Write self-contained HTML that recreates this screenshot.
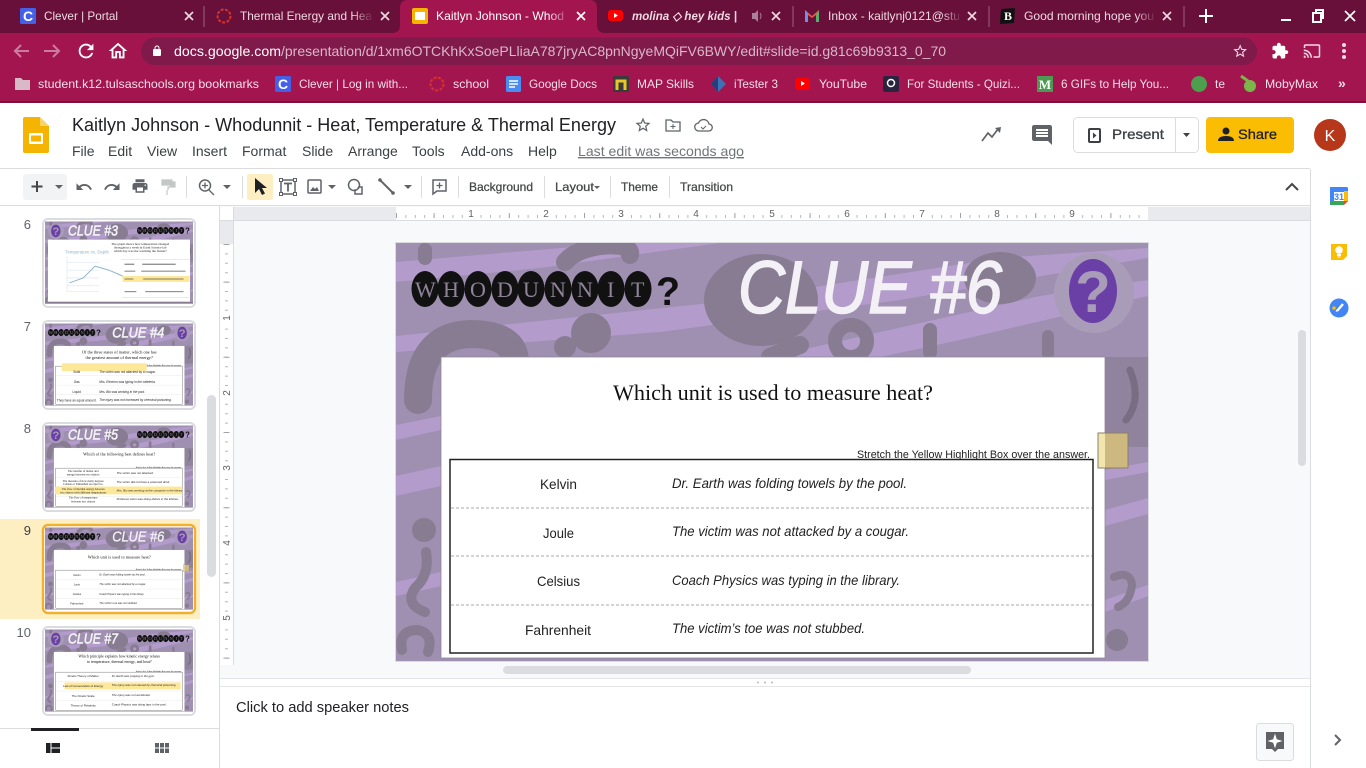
<!DOCTYPE html>
<html lang="en">
<head>
<meta charset="utf-8">
<title>Kaitlyn Johnson - Whodunnit - Heat, Temperature &amp; Thermal Energy</title>
<style>
html,body{margin:0;padding:0;width:1366px;height:768px;overflow:hidden;background:#fff}
svg{display:block;font-family:"Liberation Sans",Arial,sans-serif}
.tab{font-size:12px;fill:#f0d8e3}
.bm{font-size:12px;fill:#f2dfe8}
.menu{font-size:14px;fill:#3c4043}
.tb{font-size:12px;fill:#444746;stroke:#444746;stroke-width:.25px}
.rn{font-size:10px;fill:#5f6368}
.num{font-size:13px;fill:#5f6368}
.x{stroke:#fff;stroke-width:1.7;fill:none}
.xd{stroke:#f0d8e3;stroke-width:1.7;fill:none}
.clue{font-style:italic;font-size:74px;fill:#f3f1f5;stroke:#f3f1f5;stroke-width:1.6px}
.cluet{font-style:italic;font-size:74px;fill:#f3f1f5;stroke:#f3f1f5;stroke-width:3px}
</style>
</head>
<body>
<svg width="1366" height="768" viewBox="0 0 1366 768" xmlns="http://www.w3.org/2000/svg">
<defs>
<linearGradient id="fd" x1="0" x2="1" y1="0" y2="0"><stop offset="0" stop-color="#68103a" stop-opacity="0"/><stop offset="1" stop-color="#68103a"/></linearGradient>
<linearGradient id="fa" x1="0" x2="1" y1="0" y2="0"><stop offset="0" stop-color="#a3154f" stop-opacity="0"/><stop offset="1" stop-color="#a3154f"/></linearGradient>
<clipPath id="slideclip"><rect x="396" y="243" width="752" height="418"/></clipPath>

<g id="bg">
<rect x="396" y="243" width="752" height="418" fill="#9f8fb1"/>
<g fill="#b39ccb">
<polygon points="396,262 620,243 720,243 540,268 396,282"/>
<polygon points="396,336 720,302 1000,258 1148,248 1148,258 900,300 660,332 396,352"/>
<polygon points="770,357 1040,296 1148,280 1148,296 960,340 880,357"/>
<polygon points="396,476 441,466 441,486 396,496"/>
<polygon points="396,582 441,572 441,586 396,596"/>
<polygon points="1105,510 1148,498 1148,514 1105,526"/>
<polygon points="1105,600 1148,585 1148,596 1105,612"/>
<polygon points="1105,470 1148,462 1148,472 1105,480"/>
<polygon points="396,425 441,416 441,430 396,440"/>
</g>
<g fill="#887c92">
<ellipse cx="761" cy="300" rx="57" ry="46"/>
<circle cx="591" cy="333" r="20"/>
<circle cx="565" cy="347" r="11"/>
<ellipse cx="1000" cy="278" rx="36" ry="26"/>
<rect x="923" y="323" width="14" height="36" rx="7"/>
<rect x="1042" y="330" width="12" height="30" rx="6"/>
<rect x="418" y="243" width="14" height="22" rx="7"/>
<circle cx="424" cy="530" r="12"/>
<circle cx="1117" cy="640" r="11"/>
<rect x="1105" y="357" width="43" height="90" opacity=".65"/>
</g>
<g fill="none" stroke="#887c92" stroke-linecap="round">
<path d="M565 262Q575 250 600 246Q632 243 630 255" stroke-width="18"/>
<path d="M418 400Q418 336 470 334Q515 334 515 362" stroke-width="28"/>
<path d="M851 325a16 16 0 1 0 .1 0" stroke-width="14"/>
<path d="M800 345L770 357" stroke-width="18"/>
<path d="M426 552Q430 575 415 588Q404 604 425 612" stroke-width="10"/>
<path d="M1114 577Q1130 570 1132 585Q1130 602 1118 607" stroke-width="8"/>
<path d="M402 650Q398 630 418 630Q434 634 428 652" stroke-width="10"/>
<path d="M1126 420Q1142 400 1130 370" stroke-width="7" stroke="#786d82"/>
</g>
</g>

<g id="whod">
<g fill="#111">
<ellipse cx="425" cy="289" rx="13.500" ry="18"/><ellipse cx="451" cy="289" rx="13.500" ry="18"/><ellipse cx="478" cy="289" rx="13.500" ry="18"/><ellipse cx="505" cy="289" rx="13.500" ry="18"/><ellipse cx="531" cy="289" rx="13.500" ry="18"/><ellipse cx="558" cy="289" rx="13.500" ry="18"/><ellipse cx="585" cy="289" rx="13.500" ry="18"/><ellipse cx="611" cy="289" rx="13.500" ry="18"/><ellipse cx="638" cy="289" rx="13.500" ry="18"/>
</g>
<text x="415 443 470 497 523 550 577 607 631" y="297" font-family="'Liberation Serif',serif" font-size="22" fill="#8f8399">WHODUNNIT</text>
<text x="656" y="305" font-weight="bold" font-size="40" fill="#111" textLength="24" lengthAdjust="spacingAndGlyphs">?</text>
</g>

<g id="badge">
<circle cx="1094" cy="293" r="40" fill="#a99cb9"/>
<ellipse cx="1093" cy="291" rx="24" ry="32" fill="#6a3fa6"/>
<text x="1093" y="312" text-anchor="middle" font-weight="bold" font-size="58" fill="#a99cb9">?</text>
</g>

<g id="panel">
<rect x="441" y="357" width="664" height="301" fill="#fff" stroke="#8f8a96" stroke-width=".8"/>
<text x="857" y="458" font-size="11" fill="#222" textLength="233" lengthAdjust="spacingAndGlyphs">Stretch the Yellow Highlight Box over the answer.</text>
<rect x="450" y="459.500" width="643" height="193.500" fill="#fff" stroke="#222" stroke-width="1.500"/>
<g stroke="#a8a8a8" stroke-dasharray="3 2"><path d="M451 508H1092M451 556H1092M451 605H1092"/></g>
</g>

<g id="slide6body">
<use href="#bg"/>
<use href="#whod"/>
<text class="clue" x="738" y="313" textLength="264" lengthAdjust="spacingAndGlyphs">CLUE #6</text>
<use href="#badge"/>
<use href="#panel"/>
<text x="613" y="400" font-family="'Liberation Serif',serif" font-size="22" fill="#111" textLength="320" lengthAdjust="spacingAndGlyphs">Which unit is used to measure heat?</text>
<g font-size="14" fill="#222">
<text x="540" y="489" textLength="37" lengthAdjust="spacingAndGlyphs">Kelvin</text>
<text x="543" y="538" textLength="31" lengthAdjust="spacingAndGlyphs">Joule</text>
<text x="537" y="586" textLength="43" lengthAdjust="spacingAndGlyphs">Celsius</text>
<text x="525" y="635" textLength="66" lengthAdjust="spacingAndGlyphs">Fahrenheit</text>
</g>
<g font-size="14" font-style="italic" fill="#222">
<text x="672" y="488" textLength="235" lengthAdjust="spacingAndGlyphs">Dr. Earth was folding towels by the pool.</text>
<text x="672" y="536" textLength="237" lengthAdjust="spacingAndGlyphs">The victim was not attacked by a cougar.</text>
<text x="672" y="585" textLength="228" lengthAdjust="spacingAndGlyphs">Coach Physics was typing in the library.</text>
<text x="672" y="633" textLength="193" lengthAdjust="spacingAndGlyphs">The victim’s toe was not stubbed.</text>
</g>
<rect x="1098" y="433" width="7" height="35" fill="#f2e6ae"/>
<rect x="1105" y="433" width="23" height="35" fill="#cdb97f"/>
<rect x="1098" y="433" width="30" height="35" fill="none" stroke="#8a8065"/>
</g>

<g id="hdrR">
<use href="#bg"/>
<use href="#badge" transform="translate(-642,0)"/>
<use href="#whod" transform="translate(452,0)"/>
</g>
<g id="hdrL">
<use href="#bg"/>
<use href="#whod"/>
<use href="#badge"/>
</g>
<clipPath id="tc"><rect x="396" y="243" width="752" height="418"/></clipPath>

<g id="fav-c"><rect x="0" y="0" width="16" height="16" rx="1.500" fill="#4460e6"/><text x="8" y="13" font-size="14" font-weight="bold" text-anchor="middle" fill="#fff">C</text></g>
<g id="ring"><circle cx="8" cy="8" r="6.500" fill="none" stroke="#d7332c" stroke-width="2" stroke-dasharray="3 1.500"/></g>
</defs>

<!-- CHROME TAB STRIP -->
<rect width="1366" height="33" fill="#68103a"/>
<rect y="33" width="1366" height="68" fill="#a3154f"/>
<rect y="101" width="1366" height="2" fill="#7a1238"/>
<path d="M392 33q8 0 8-8V8q0-8 8-8h181q8 0 8 8v17q0 8 8 8z" fill="#a3154f"/>
<g stroke="#9a5f7c"><path d="M204 6V27M793 6V27M989 6V27M1184 6V27"/></g>

<use href="#fav-c" x="20" y="8"/>
<text class="tab" x="44" y="20" textLength="74" lengthAdjust="spacingAndGlyphs">Clever | Portal</text>
<path class="xd" d="M185 12l8 8m0-8l-8 8"/>
<use href="#ring" x="216" y="8"/>
<text class="tab" x="240" y="20" textLength="132" lengthAdjust="spacingAndGlyphs">Thermal Energy and Hea</text>
<rect x="352" y="8" width="22" height="16" fill="url(#fd)"/>
<path class="xd" d="M381 12l8 8m0-8l-8 8"/>

<rect x="412" y="8" width="16" height="16" rx="2" fill="#f4b400"/><rect x="415" y="12" width="10" height="8" fill="#fff"/>
<text x="436" y="20" font-size="12" fill="#fff" textLength="128" lengthAdjust="spacingAndGlyphs">Kaitlyn Johnson - Whod</text>
<rect x="548" y="8" width="22" height="16" fill="url(#fa)"/>
<path class="x" d="M577 12l8 8m0-8l-8 8"/>

<rect x="608" y="10" width="15" height="11" rx="3" fill="#f00"/><path d="M614 13v5l4-2.500z" fill="#fff"/>
<text x="632" y="20" font-size="12" font-weight="bold" font-style="italic" fill="#f0d8e3" textLength="105" lengthAdjust="spacingAndGlyphs">molina ◇ hey kids |</text>
<path d="M752 13h3l3-3v12l-3-3h-3z" fill="#a98097"/><path d="M760 13q2 3 0 6" stroke="#a98097" fill="none"/>
<path class="xd" d="M772 12l8 8m0-8l-8 8"/>

<path d="M805 22V10l7 6 7-6v12h-3v-7l-4 3-4-3v7z" fill="#e35a4a"/><path d="M816 22v-7l3-5v12z" fill="#5ab06a"/><path d="M805 22V10l3 3v9z" fill="#6f8fe0"/>
<text class="tab" x="828" y="20" textLength="132" lengthAdjust="spacingAndGlyphs">Inbox - kaitlynj0121@stu</text>
<rect x="942" y="8" width="20" height="16" fill="url(#fd)"/>
<path class="xd" d="M968 12l8 8m0-8l-8 8"/>

<path d="M1001 9l14-1-1 15-14 1z" fill="#111"/><text x="1008" y="20" font-size="12" font-weight="bold" text-anchor="middle" fill="#fff" font-family="'Liberation Serif',serif">B</text>
<text class="tab" x="1024" y="20" textLength="130" lengthAdjust="spacingAndGlyphs">Good morning hope you</text>
<rect x="1136" y="8" width="20" height="16" fill="url(#fd)"/>
<path class="xd" d="M1163 12l8 8m0-8l-8 8"/>

<path d="M1206 9v14M1199 16h14" stroke="#fff" stroke-width="2"/>
<rect x="1281" y="19" width="10" height="2" fill="#fff"/>
<path d="M1313 13h8v9h-8zM1316 13v-3h7v8h-2" fill="none" stroke="#fff" stroke-width="2"/>
<path class="x" d="M1345 11l10 10m0-10l-10 10"/>

<!-- TOOLBAR -->
<rect x="141" y="37.500" width="1116" height="27.500" rx="13.750" fill="#7f1a4b"/>
<path d="M14 51h15M21 45l-6 6 6 6" stroke="#cc7c9f" stroke-width="2" fill="none"/>
<path d="M44 51h15M53 45l6 6-6 6" stroke="#cc7c9f" stroke-width="2" fill="none"/>
<path transform="translate(75,40) scale(.92)" fill="#fff" d="M17.650 6.350C16.200 4.900 14.210 4 12 4c-4.420 0-7.990 3.580-7.990 8s3.570 8 7.990 8c3.730 0 6.840-2.550 7.730-6h-2.080c-.82 2.330-3.040 4-5.650 4-3.310 0-6-2.690-6-6s2.690-6 6-6c1.660 0 3.140.69 4.220 1.780L13 11h7V4l-2.350 2.350z"/>
<path transform="translate(107,40) scale(.92)" fill="#fff" d="M12 5.690l5 4.500V18h-2v-6H9v6H7v-7.810l5-4.500M12 3L2 12h3v8h6v-6h2v6h6v-8h3L12 3z"/>
<path transform="translate(151,45) scale(.5)" fill="#fff" d="M18 8h-1V6c0-2.760-2.240-5-5-5S7 3.240 7 6v2H6c-1.100 0-2 .9-2 2v10c0 1.100.9 2 2 2h12c1.100 0 2-.9 2-2V10c0-1.100-.9-2-2-2zM9 6c0-1.660 1.340-3 3-3s3 1.340 3 3v2H9V6z"/>
<text x="174" y="56" font-size="14" fill="#fff" textLength="107" lengthAdjust="spacingAndGlyphs">docs.google.com</text>
<text x="281" y="56" font-size="14" fill="#dcb6c8" textLength="665" lengthAdjust="spacingAndGlyphs">/presentation/d/1xm6OTCKhKxSoePLliaA787jryAC8pnNgyeMQiFV6BWY/edit#slide=id.g81c69b9313_0_70</text>
<path transform="translate(1232,43) scale(.68)" fill="#f3dbe6" d="M22 9.240l-7.190-.62L12 2 9.190 8.630 2 9.240l5.460 4.730L5.820 21 12 17.270 18.180 21l-1.630-7.030L22 9.240zM12 15.400l-3.760 2.270 1-4.280-3.320-2.880 4.380-.38L12 6.100l1.710 4.040 4.380.38-3.320 2.880 1 4.280L12 15.400z"/>
<path transform="translate(1271,42) scale(.75)" fill="#fff" d="M20.500 11H19V7c0-1.100-.9-2-2-2h-4V3.500C13 2.120 11.880 1 10.500 1S8 2.120 8 3.500V5H4c-1.100 0-1.990.9-1.990 2v3.800H3.500c1.490 0 2.700 1.210 2.700 2.700s-1.210 2.700-2.700 2.700H2V20c0 1.100.9 2 2 2h3.800v-1.500c0-1.490 1.210-2.700 2.700-2.700 1.490 0 2.700 1.210 2.700 2.700V22H17c1.100 0 2-.9 2-2v-4h1.500c1.380 0 2.500-1.120 2.500-2.500S21.880 11 20.500 11z"/>
<path transform="translate(1303,42) scale(.75)" fill="#f3dbe6" d="M21 3H3c-1.100 0-2 .9-2 2v3h2V5h18v14h-7v2h7c1.100 0 2-.9 2-2V5c0-1.100-.9-2-2-2zM1 18v3h3c0-1.660-1.340-3-3-3zm0-4v2c2.760 0 5 2.240 5 5h2c0-3.870-3.130-7-7-7zm0-4v2c4.970 0 9 4.030 9 9h2c0-6.080-4.930-11-11-11z"/>
<g fill="#f3dbe6"><circle cx="1344" cy="45" r="2"/><circle cx="1344" cy="51" r="2"/><circle cx="1344" cy="57" r="2"/></g>

<!-- BOOKMARKS -->
<path d="M15 78h6l2 2h7v10H15z" fill="#d8b9c8"/>
<text class="bm" x="38" y="88" textLength="221" lengthAdjust="spacingAndGlyphs">student.k12.tulsaschools.org bookmarks</text>
<use href="#fav-c" x="275" y="76"/>
<text class="bm" x="299" y="88" textLength="109" lengthAdjust="spacingAndGlyphs">Clever | Log in with...</text>
<use href="#ring" x="429" y="76"/>
<text class="bm" x="453" y="88" textLength="36" lengthAdjust="spacingAndGlyphs">school</text>
<rect x="506" y="76" width="15" height="16" rx="1.500" fill="#4a8df0"/><path d="M509 81h9M509 84h9M509 87h6" stroke="#fff" stroke-width="1.500"/>
<text class="bm" x="529" y="88" textLength="68" lengthAdjust="spacingAndGlyphs">Google Docs</text>
<rect x="613" y="76" width="16" height="16" rx="1" fill="#3a3a3a"/><path d="M617 90V81h8v9" fill="none" stroke="#e8c52a" stroke-width="3"/>
<text class="bm" x="637" y="88" textLength="57" lengthAdjust="spacingAndGlyphs">MAP Skills</text>
<path d="M718 76l8 8-8 8-7-8z" fill="#3b72b8"/><path d="M718 76l-7 8 7 8z" fill="#243f7a"/>
<text class="bm" x="734" y="88" textLength="44" lengthAdjust="spacingAndGlyphs">iTester 3</text>
<rect x="795" y="78" width="15" height="12" rx="3" fill="#f00"/><path d="M801 81v5l4-2.500z" fill="#fff"/>
<text class="bm" x="819" y="88" textLength="48" lengthAdjust="spacingAndGlyphs">YouTube</text>
<rect x="883" y="76" width="16" height="16" rx="2" fill="#2a2440"/><circle cx="891" cy="83" r="3.500" fill="none" stroke="#fff" stroke-width="1.500"/>
<text class="bm" x="907" y="88" textLength="113" lengthAdjust="spacingAndGlyphs">For Students - Quizi...</text>
<rect x="1037" y="76" width="16" height="16" fill="#4c9a52"/><text x="1045" y="89" font-size="13" font-weight="bold" text-anchor="middle" fill="#fff" font-family="'Liberation Serif',serif">M</text>
<text class="bm" x="1061" y="88" textLength="108" lengthAdjust="spacingAndGlyphs">6 GIFs to Help You...</text>
<circle cx="1199" cy="84" r="8" fill="#4c9f4c"/>
<text class="bm" x="1215" y="88" textLength="10" lengthAdjust="spacingAndGlyphs">te</text>
<ellipse cx="1250" cy="86" rx="6" ry="6" fill="#7ab648"/><path d="M1241 76l7 5" stroke="#7ab648" stroke-width="3"/>
<text class="bm" x="1265" y="88" textLength="53" lengthAdjust="spacingAndGlyphs">MobyMax</text>
<text x="1338" y="88" font-size="14" font-weight="bold" fill="#f3dbe6">»</text>

<!-- DOCS HEADER -->
<rect y="103" width="1366" height="665" fill="#fff"/>
<path d="M25 117h15l9 9v25q0 2-2 2H25q-2 0-2-2v-32q0-2 2-2z" fill="#f4b400"/>
<path d="M40 117l9 9h-9z" fill="#f8d568"/>
<rect x="29" y="133" width="14" height="11" rx="1" fill="#fff"/><rect x="31" y="135.500" width="10" height="6" fill="#f4b400"/>
<text x="72" y="131" font-size="18" fill="#202124" textLength="544" lengthAdjust="spacingAndGlyphs">Kaitlyn Johnson - Whodunnit - Heat, Temperature &amp; Thermal Energy</text>
<path transform="translate(634,116) scale(.75)" fill="#5f6368" d="M22 9.240l-7.190-.62L12 2 9.190 8.630 2 9.240l5.460 4.730L5.820 21 12 17.270 18.180 21l-1.630-7.030L22 9.240zM12 15.400l-3.760 2.270 1-4.280-3.320-2.880 4.380-.38L12 6.100l1.710 4.040 4.380.38-3.320 2.880 1 4.280L12 15.400z"/>
<path d="M666 120h5l2 2h7v9h-14z" fill="none" stroke="#5f6368" stroke-width="1.300"/><path d="M673 124v5M670.500 126.500h5" stroke="#5f6368"/>
<path d="M699 131a4 4 0 0 1-.5-8 5.500 5.500 0 0 1 10.500 1 3.500 3.500 0 0 1-.5 7z" fill="none" stroke="#5f6368" stroke-width="1.300"/><path d="M701 127l2 2 3-3" fill="none" stroke="#5f6368"/>
<text class="menu" x="72" y="156">File</text>
<text class="menu" x="108" y="156">Edit</text>
<text class="menu" x="147" y="156">View</text>
<text class="menu" x="192" y="156">Insert</text>
<text class="menu" x="242" y="156">Format</text>
<text class="menu" x="302" y="156">Slide</text>
<text class="menu" x="348" y="156">Arrange</text>
<text class="menu" x="412" y="156">Tools</text>
<text class="menu" x="461" y="156">Add-ons</text>
<text class="menu" x="528" y="156">Help</text>
<text x="578" y="156" font-size="14" fill="#70757a" text-decoration="underline" textLength="166" lengthAdjust="spacingAndGlyphs">Last edit was seconds ago</text>

<path fill="none" stroke="#5f6368" stroke-width="1.700" d="M982 141l6-8 4 4 6-8"/><path d="M995 128l6-1-1 6z" fill="#5f6368"/>
<path transform="translate(1030,123)" fill="#5f6368" d="M21.990 4c0-1.100-.89-2-1.990-2H4c-1.100 0-2 .9-2 2v12c0 1.100.9 2 2 2h14l4 4-.01-18zM18 14H6v-2h12v2zm0-3H6V9h12v2zm0-3H6V6h12v2z"/>
<rect x="1073.500" y="117.500" width="125" height="35" rx="4" fill="#fff" stroke="#dadce0"/>
<path d="M1175.500 118V152" stroke="#dadce0"/>
<rect x="1089" y="129" width="11" height="13" rx="1" fill="none" stroke="#3c4043" stroke-width="2"/><path d="M1093 132.500v6l3.500-3z" fill="#3c4043"/>
<text x="1112" y="139" font-size="14" fill="#3c4043" stroke="#3c4043" stroke-width=".3" textLength="52" lengthAdjust="spacingAndGlyphs">Present</text>
<path d="M1183 133h7l-3.500 4z" fill="#3c4043"/>
<rect x="1206" y="117" width="88" height="36" rx="4" fill="#fbbc04"/>
<circle cx="1226" cy="131" r="3.500" fill="#202124"/><path d="M1218 141q0-5 8-5t8 5z" fill="#202124"/>
<text x="1238" y="139" font-size="14" fill="#202124" stroke="#202124" stroke-width=".3" textLength="39" lengthAdjust="spacingAndGlyphs">Share</text>
<circle cx="1330" cy="135" r="16" fill="#b7371a"/>
<text x="1330" y="141" font-size="16" text-anchor="middle" fill="#fff">K</text>

<path d="M0 168.500H1310" stroke="#dadce0"/>

<!-- EDIT TOOLBAR -->
<rect x="23" y="174" width="44" height="26" rx="3" fill="#f1f3f4"/>
<path d="M37 181v11M31.500 186.500h11" stroke="#444746" stroke-width="2"/>
<path d="M55 185h8l-4 4z" fill="#5f6368"/>
<path transform="translate(75,178) scale(.75)" fill="#5f6368" d="M12.500 8c-2.650 0-5.050.99-6.900 2.600L2 7v9h9l-3.620-3.620c1.390-1.160 3.160-1.880 5.120-1.880 3.540 0 6.550 2.310 7.600 5.500l2.370-.78C21.080 11.030 17.150 8 12.500 8z"/>
<path transform="translate(103,178) scale(.75)" fill="#5f6368" d="M18.400 10.600C16.550 8.990 14.150 8 11.500 8c-4.650 0-8.580 3.030-9.960 7.220L3.900 16c1.050-3.190 4.050-5.500 7.600-5.500 1.950 0 3.730.72 5.120 1.880L13 16h9V7l-3.600 3.600z"/>
<path transform="translate(131,177) scale(.75)" fill="#5f6368" d="M19 8H5c-1.660 0-3 1.340-3 3v6h4v4h12v-4h4v-6c0-1.660-1.340-3-3-3zm-3 11H8v-5h8v5zm3-7c-.55 0-1-.45-1-1s.45-1 1-1 1 .45 1 1-.45 1-1 1zm-1-9H6v4h12V3z"/>
<path d="M162 180h10v5h-10zM172 182h3v5h-7v3M167 190v5" fill="#c4c7c5" stroke="#c4c7c5" stroke-width="1.200"/>
<g stroke="#dadce0"><path d="M186.500 176V198M242.500 176V198M421.500 176V198M458.500 176V198M544.500 176V198M610.500 176V198M669.500 176V198"/></g>
<circle cx="205" cy="185.500" r="5.500" fill="none" stroke="#5f6368" stroke-width="1.500"/><path d="M209 190l5 5M202 185.500h6M205 182.500v6" stroke="#5f6368" stroke-width="1.300"/>
<path d="M223 185h8l-4 4z" fill="#5f6368"/>
<rect x="247" y="174" width="26" height="26" rx="2" fill="#feefc3"/>
<path d="M255 178v15l4-4 3 6 3-1.500-3-5.500h5z" fill="#202124"/>
<rect x="281" y="180" width="14" height="14" fill="none" stroke="#5f6368" stroke-width="1.500"/>
<g fill="#fff" stroke="#5f6368"><rect x="279.500" y="178.500" width="3" height="3"/><rect x="293.500" y="178.500" width="3" height="3"/><rect x="279.500" y="192.500" width="3" height="3"/><rect x="293.500" y="192.500" width="3" height="3"/></g>
<path d="M284 183.500h8M288 183.500v8" stroke="#5f6368" stroke-width="1.800"/>
<rect x="308" y="180" width="13" height="13" rx="1" fill="none" stroke="#5f6368" stroke-width="1.500"/><path d="M310 191l3-4 2 2 2-2 2 4z" fill="#5f6368"/>
<path d="M328 185h8l-4 4z" fill="#5f6368"/>
<path d="M355 187h7v7h-7z" fill="none" stroke="#5f6368" stroke-width="1.500"/><circle cx="354" cy="185" r="4.500" fill="#fff"/><circle cx="354" cy="185" r="5.500" fill="none" stroke="#5f6368" stroke-width="1.500"/>
<path d="M380 180l13 13" stroke="#5f6368" stroke-width="2"/><circle cx="380" cy="180" r="1.800" fill="#5f6368"/><circle cx="393" cy="193" r="1.800" fill="#5f6368"/>
<path d="M404 185h8l-4 4z" fill="#5f6368"/>
<path d="M433 180h13v11h-9l-4 3z" fill="none" stroke="#5f6368" stroke-width="1.500"/><path d="M439.500 182.500v6M436.500 185.500h6" stroke="#5f6368" stroke-width="1.300"/>
<text class="tb" x="469" y="191" textLength="64" lengthAdjust="spacingAndGlyphs">Background</text>
<text class="tb" x="555" y="191" textLength="39" lengthAdjust="spacingAndGlyphs">Layout</text>
<path d="M594 186h6l-3 3z" fill="#5f6368"/>
<text class="tb" x="621" y="191" textLength="37" lengthAdjust="spacingAndGlyphs">Theme</text>
<text class="tb" x="680" y="191" textLength="53" lengthAdjust="spacingAndGlyphs">Transition</text>
<path d="M1286 190l6-6 6 6" fill="none" stroke="#444746" stroke-width="2"/>

<!-- CANVAS AND RULERS -->
<path d="M0 205.500H1310" stroke="#dadce0"/>
<rect x="220" y="206" width="1090" height="472" fill="#f8f9fa"/>
<rect x="233" y="207" width="1077" height="13" fill="#e8eaed"/>
<rect x="396" y="207" width="752" height="13" fill="#fff"/>
<rect x="220" y="207" width="13" height="13" fill="#fff"/>
<rect x="220" y="220" width="13" height="24" fill="#e8eaed"/>
<rect x="220" y="244" width="13" height="421" fill="#fff"/>
<path d="M220 220.500H1310M233.500 207V665" stroke="#dadce0"/>
<path d="M396 216.500H1148" stroke="#b4b8bd" stroke-width="3" stroke-dasharray="1 8.400"/>
<path d="M396 215.500H1148" stroke="#a0a4a9" stroke-width="5" stroke-dasharray="1 36.600"/>
<path d="M226.500 244V662" stroke="#b4b8bd" stroke-width="3" stroke-dasharray="1 8.400"/>
<path d="M226.500 244V662" stroke="#a0a4a9" stroke-width="6" stroke-dasharray="1 36.600"/>
<g fill="#fff"><rect x="465" y="208" width="12" height="10"/><rect x="540" y="208" width="12" height="10"/><rect x="615" y="208" width="12" height="10"/><rect x="690" y="208" width="12" height="10"/><rect x="766" y="208" width="12" height="10"/><rect x="841" y="208" width="12" height="10"/><rect x="916" y="208" width="12" height="10"/><rect x="991" y="208" width="12" height="10"/><rect x="1066" y="208" width="12" height="10"/></g>
<g text-anchor="middle">
<text class="rn" x="471" y="217">1</text><text class="rn" x="546" y="217">2</text><text class="rn" x="621" y="217">3</text><text class="rn" x="696" y="217">4</text><text class="rn" x="772" y="217">5</text><text class="rn" x="847" y="217">6</text><text class="rn" x="922" y="217">7</text><text class="rn" x="997" y="217">8</text><text class="rn" x="1072" y="217">9</text>
</g>
<g fill="#fff"><rect x="221" y="312" width="11" height="12"/><rect x="221" y="387" width="11" height="12"/><rect x="221" y="462" width="11" height="12"/><rect x="221" y="537" width="11" height="12"/><rect x="221" y="612" width="11" height="12"/></g>
<g text-anchor="middle">
<text class="rn" transform="translate(230,318) rotate(-90)">1</text>
<text class="rn" transform="translate(230,393) rotate(-90)">2</text>
<text class="rn" transform="translate(230,468) rotate(-90)">3</text>
<text class="rn" transform="translate(230,543) rotate(-90)">4</text>
<text class="rn" transform="translate(230,618) rotate(-90)">5</text>
</g>

<!-- MAIN SLIDE -->
<g clip-path="url(#slideclip)"><use href="#slide6body"/></g>
<rect x="395.500" y="242.500" width="753" height="419" fill="none" stroke="#dadce0"/>

<rect x="1298" y="330" width="8" height="136" rx="4" fill="#dadce0"/>
<rect x="503" y="666" width="468" height="8" rx="4" fill="#dadce0"/>

<rect x="220" y="678" width="1090" height="9" fill="#fff"/>
<path d="M220 678.500H1310M220 686.500H1310" stroke="#e3e5e8"/>
<g fill="#b5b8bc"><circle cx="758" cy="682.500" r="1"/><circle cx="765" cy="682.500" r="1"/><circle cx="772" cy="682.500" r="1"/></g>
<text x="236" y="712" font-size="15" fill="#202124" textLength="173" lengthAdjust="spacingAndGlyphs">Click to add speaker notes</text>

<rect x="1256.500" y="723.500" width="37" height="37" rx="3" fill="#f8f9fa" stroke="#dadce0"/>
<path d="M1266 732h18v17h-6l-3 3-3-3h-6z" fill="#5f6368"/>
<path d="M1275 733.500l1.800 5.700 5.700 1.800-5.700 1.800-1.800 5.700-1.800-5.700-5.700-1.800 5.700-1.800z" fill="#fff"/>

<!-- SIDE PANEL -->
<path d="M1310.500 169V768" stroke="#dadce0"/>
<rect x="1330" y="187" width="18" height="18" rx="1.500" fill="#fff"/>
<path d="M1330 192v-3.500q0-1.500 1.500-1.500h15q1.500 0 1.500 1.500v3.500z" fill="#4285f4"/>
<rect x="1330" y="187" width="4" height="18" fill="#4285f4"/>
<rect x="1344" y="191" width="4" height="11" fill="#fbbc04"/>
<path d="M1330 201h14v4h-12.500q-1.500 0-1.500-1.500z" fill="#34a853"/>
<path d="M1344 201h4l-4 4z" fill="#ea4335"/>
<text x="1339" y="200" font-size="9" font-weight="bold" text-anchor="middle" fill="#4285f4">31</text>
<path d="M1331 244h16v12l-4 4h-12z" fill="#fbbc04"/>
<circle cx="1339" cy="250" r="3.800" fill="#fff"/><rect x="1337" y="254" width="4" height="2" fill="#fff"/><rect x="1337.500" y="256.500" width="3" height="1" fill="#fff"/>
<circle cx="1339" cy="308" r="9.500" fill="#4285f4"/>
<path d="M1337 311l6-7" stroke="#fff" stroke-width="2.400"/><path d="M1337 311l-1-.5" stroke="#fff" stroke-width="2"/><circle cx="1334" cy="308" r="1.800" fill="#fbbc04"/>
<path d="M1335 735l5 5-5 5" fill="none" stroke="#5f6368" stroke-width="2"/>

<!-- FILMSTRIP -->
<path d="M219.500 206V768" stroke="#dadce0"/>
<rect x="0" y="519" width="200" height="100" fill="#feefc3"/>
<rect x="207" y="395" width="9" height="182" rx="4.500" fill="#dadce0"/>

<g text-anchor="end">
<text class="num" x="31" y="229">6</text>
<text class="num" x="31" y="331">7</text>
<text class="num" x="31" y="433">8</text>
<text class="num" x="31" y="535" style="fill:#3c4043">9</text>
<text class="num" x="31" y="637">10</text>
</g>

<!-- thumb 6 -->
<rect x="43" y="219" width="152" height="88" rx="5" fill="#fff" stroke="#dadce0" stroke-width="2"/>
<g transform="translate(45,221.500) scale(.1968) translate(-396,-243)" clip-path="url(#tc)">
<use href="#hdrR"/>
<text class="cluet" x="513" y="313" textLength="254" lengthAdjust="spacingAndGlyphs">CLUE #3</text>
<rect x="411" y="335" width="722" height="316" fill="#fff"/>
<rect x="396" y="651" width="752" height="10" fill="#887c92"/>
<text x="610" y="405" font-size="22" fill="#8fb4cf" text-anchor="middle">Temperature vs. Depth</text>
<path d="M508 420V600H670M508 450H670M508 490H670M508 530H670M508 570H670" stroke="#d7e3ec" stroke-width="3" fill="none"/>
<path d="M520 555L590 530L650 470L720 490L790 520" stroke="#8fb4cf" stroke-width="5" fill="none"/>
<g font-family="'Liberation Serif',serif" font-size="17" fill="#222" text-anchor="middle"><text x="880" y="362">The graph shows how temperature changed</text><text x="880" y="380">throughout a week in Earth Science lab</text><text x="880" y="398">which day was the warming the fastest?</text></g>
<path d="M785 435H1130M785 525H1130M785 630H1130" stroke="#c8c8c8" stroke-width="2"/>
<rect x="790" y="520" width="340" height="30" fill="#fde89a"/>
<path d="M800 460H850M890 460H1060M800 495H855M885 495H1110M800 535H845M895 535H1100M800 600H860M905 600H1100" stroke="#555" stroke-width="4"/>
</g>

<!-- thumb 7 -->
<rect x="43" y="321" width="152" height="88" rx="5" fill="#fff" stroke="#dadce0" stroke-width="2"/>
<g transform="translate(45,323.500) scale(.1968) translate(-396,-243)" clip-path="url(#tc)">
<use href="#hdrL"/>
<text class="cluet" x="738" y="313" textLength="264" lengthAdjust="spacingAndGlyphs">CLUE #4</text>
<use href="#panel"/>
<g font-family="'Liberation Serif',serif" font-size="22" fill="#111" text-anchor="middle"><text x="773" y="395">Of the three states of matter, which one has</text><text x="773" y="424">the greatest amount of thermal energy?</text></g>
<rect x="482" y="445" width="430" height="40" fill="#fde89a"/>
<g font-size="16" fill="#222" text-anchor="middle"><text x="557" y="495">Solid</text><text x="557" y="545">Gas</text><text x="557" y="595">Liquid</text><text x="557" y="640">They have an equal amount.</text></g>
<g font-size="16" fill="#222" font-style="italic"><text x="672" y="495">The victim was not attacked by a cougar.</text><text x="672" y="545">Mrs. Electron was typing in the cafeteria.</text><text x="672" y="595">Mrs. Bio was working in the pool.</text><text x="672" y="638">The injury was not increased by chemical poisoning.</text></g>
</g>

<!-- thumb 8 -->
<rect x="43" y="423" width="152" height="88" rx="5" fill="#fff" stroke="#dadce0" stroke-width="2"/>
<g transform="translate(45,425.500) scale(.1968) translate(-396,-243)" clip-path="url(#tc)">
<use href="#hdrR"/>
<text class="cluet" x="513" y="313" textLength="254" lengthAdjust="spacingAndGlyphs">CLUE #5</text>
<use href="#panel"/>
<text x="773" y="395" font-family="'Liberation Serif',serif" font-size="22" fill="#111" text-anchor="middle">Which of the following best defines heat?</text>
<rect x="450" y="553" width="643" height="40" fill="#fde89a"/>
<g font-family="'Liberation Serif',serif" font-size="15" fill="#222" text-anchor="middle"><text x="590" y="480">The transfer of matter and</text><text x="590" y="498">energy between two objects</text><text x="590" y="530">The measure of how many degrees</text><text x="590" y="545">Celsius or Fahrenheit an object is.</text><text x="590" y="570">The flow of thermal energy between</text><text x="590" y="588">two objects with different temperatures</text><text x="590" y="615">The flow of temperature</text><text x="590" y="635">between two objects</text></g>
<g font-size="15" fill="#222" font-style="italic"><text x="760" y="490">The victim was not attacked.</text><text x="760" y="535">The victim did not have a poisoned drink.</text><text x="760" y="578">Mrs. Bio was working at the computer in the library.</text><text x="760" y="622">Professor Astro was doing dishes in the kitchen.</text></g>
</g>

<!-- thumb 9 selected -->
<rect x="43" y="525" width="152" height="88" rx="5" fill="#fff" stroke="#eeb130" stroke-width="2.400"/>
<g transform="translate(45,527.500) scale(.1968) translate(-396,-243)" clip-path="url(#tc)">
<use href="#slide6body"/>
</g>

<!-- thumb 10 -->
<rect x="43" y="627" width="152" height="88" rx="5" fill="#fff" stroke="#dadce0" stroke-width="2"/>
<g transform="translate(45,629.500) scale(.1968) translate(-396,-243)" clip-path="url(#tc)">
<use href="#hdrR"/>
<text class="cluet" x="513" y="313" textLength="254" lengthAdjust="spacingAndGlyphs">CLUE #7</text>
<use href="#panel"/>
<g font-family="'Liberation Serif',serif" font-size="20" fill="#111" text-anchor="middle"><text x="773" y="385">Which principle explains how kinetic energy relates</text><text x="773" y="412">to temperature, thermal energy, and heat?</text></g>
<rect x="495" y="512" width="590" height="36" fill="#fde89a"/>
<g font-size="15" fill="#222" text-anchor="middle"><text x="590" y="485">Kinetic Theory of Matter</text><text x="590" y="535">Law of Conservation of Energy</text><text x="590" y="585">The Kinetic Scale</text><text x="590" y="635">Theory of Relativity</text></g>
<g font-size="15" fill="#222" font-style="italic"><text x="735" y="485">Dr. Earth was praying in the gym.</text><text x="735" y="530">The injury was not caused by chemical poisoning.</text><text x="735" y="580">The injury was not accidental.</text><text x="735" y="628">Coach Physics was doing laps in the pool.</text></g>
</g>

<!-- filmstrip footer -->
<rect x="0" y="728" width="219" height="40" fill="#fff"/>
<path d="M0 728.500H219" stroke="#dadce0"/>
<rect x="31" y="728" width="48" height="3" fill="#202124"/>
<path d="M46 743h14v10H46z" fill="#202124"/><path d="M51 743v10M51 748h9" stroke="#fff"/>
<g fill="#5f6368"><rect x="155" y="743" width="4" height="4.500"/><rect x="160" y="743" width="4" height="4.500"/><rect x="165" y="743" width="4" height="4.500"/><rect x="155" y="748.500" width="4" height="4.500"/><rect x="160" y="748.500" width="4" height="4.500"/><rect x="165" y="748.500" width="4" height="4.500"/></g>
</svg>
</body>
</html>
